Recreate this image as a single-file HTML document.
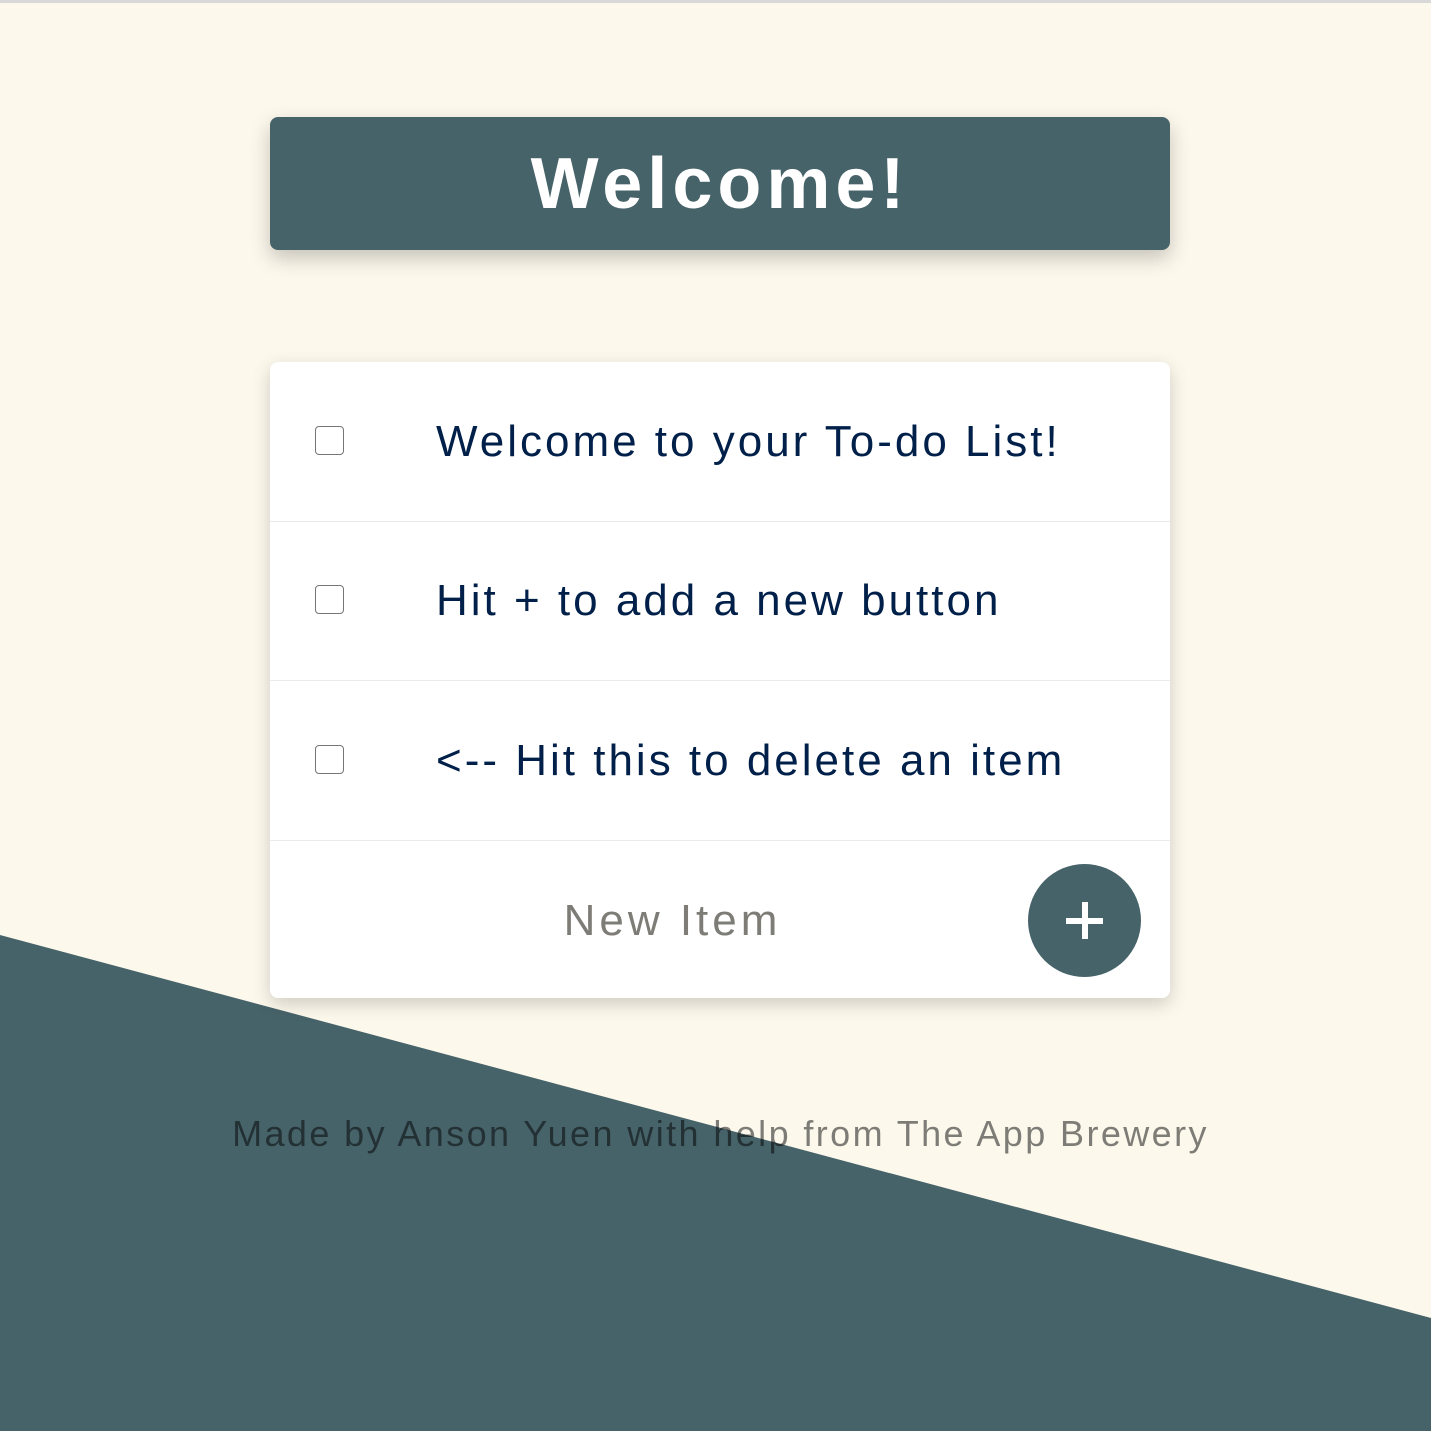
<!DOCTYPE html>
<html><head><style>
html,body{margin:0;padding:0;}
body{width:1431px;height:1431px;background:#FCF8EC;position:relative;overflow:hidden;font-family:"Liberation Sans",sans-serif;}
.topline{position:absolute;left:0;top:0;width:1431px;height:3px;background:#d8d8d8;}
svg.bg{position:absolute;left:0;top:0;}
.head{position:absolute;left:270px;top:117px;width:900px;height:133px;background:#47636A;border-radius:8px;box-shadow:0 8px 20px rgba(0,0,0,0.22);color:#fff;font-weight:bold;font-size:72px;letter-spacing:5px;text-align:center;line-height:135px;}
.box{position:absolute;left:270px;top:362px;width:900px;height:636px;background:#fff;border-radius:8px;box-shadow:0 6px 18px rgba(0,0,0,0.18);}
.row{position:absolute;left:0;width:900px;height:159px;border-bottom:1px solid #eaeaea;}
.cb{position:absolute;left:45px;top:64px;width:27px;height:27px;border:1px solid #767676;border-radius:4px;background:#fff;}
.row p{position:absolute;left:166px;top:0;margin:0;line-height:159px;font-size:44px;letter-spacing:3px;color:#00204A;white-space:nowrap;}
.ni{position:absolute;left:0;top:478px;width:805px;text-align:center;line-height:162px;font-size:44px;letter-spacing:4px;color:#7d7c76;}
.plus{position:absolute;left:758px;top:502px;width:113px;height:113px;border-radius:50%;background:#47636A;}
.plus:before{content:"";position:absolute;left:38px;top:54px;width:37px;height:6px;background:#fff;}
.plus:after{content:"";position:absolute;left:54px;top:38px;width:6px;height:37px;background:#fff;}
.foot{position:absolute;left:0;top:1108px;width:1441px;text-align:center;font-size:36px;letter-spacing:2.4px;color:rgba(0,0,0,0.5);line-height:52px;}
</style></head><body>
<div class="topline"></div>
<svg class="bg" width="1431" height="1431"><polygon points="0,935 1431,1318 1431,1431 0,1431" fill="#47636A"/></svg>
<div class="head">Welcome!</div>
<div class="box">
<div class="row" style="top:0"><div class="cb"></div><p>Welcome to your To-do List!</p></div>
<div class="row" style="top:159px"><div class="cb"></div><p>Hit + to add a new button</p></div>
<div class="row" style="top:319px"><div class="cb"></div><p>&lt;-- Hit this to delete an item</p></div>
<div class="ni">New Item</div>
<div class="plus"></div>
</div>
<div class="foot">Made by Anson Yuen with help from The App Brewery</div>
</body></html>
